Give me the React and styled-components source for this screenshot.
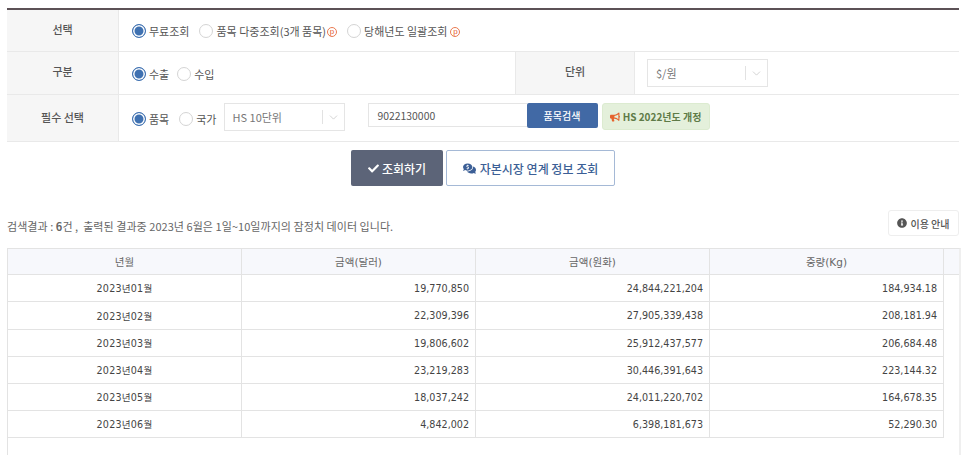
import styled, { createGlobalStyle } from "styled-components";
import { FaCheck, FaBullhorn, FaInfoCircle, FaCommentsDollar } from "react-icons/fa";
import { LuChevronDown } from "react-icons/lu";

const GlobalStyle = createGlobalStyle`
  html, body { margin: 0; padding: 0; background: #fff; }
  body {
    font-family: "Noto Sans CJK KR", "Noto Sans", sans-serif;
    font-size: 11px;
    color: #555;
    overflow: hidden;
  }
`;

const Page = styled.div`
  width: 966px;
  height: 455px;
  padding: 8px 5px 0 7px;
  box-sizing: border-box;
  overflow: hidden;
`;

const Form = styled.div`
  border-top: 2px solid #5c5156;
  width: 952px;
`;

const Row = styled.div`
  display: flex;
  height: ${(p) => p.$h}px;
  box-sizing: border-box;
  border-bottom: 1px solid #e9e9e9;
`;

const Label = styled.div`
  width: ${(p) => p.$w}px;
  flex: none;
  box-sizing: border-box;
  background: #f6f6f6;
  border-right: 1px solid #e9e9e9;
  ${(p) => p.$left && "border-left: 1px solid #e9e9e9;"}
  display: flex;
  align-items: center;
  justify-content: center;
  padding-bottom: ${(p) => p.$pb ?? 4}px;
  font-weight: 500;
  color: #555;
`;

const Cell = styled.div`
  display: flex;
  align-items: ${(p) => (p.$top ? "flex-start" : "center")};
  flex: ${(p) => (p.$fixed ? "none" : 1)};
  width: ${(p) => (p.$fixed ? `${p.$fixed}px` : "auto")};
  padding: ${(p) => (p.$top ? "8px 0 0 13px" : `0 0 0 ${p.$pl ?? 13}px`)};
  box-sizing: border-box;
`;

const Radio = styled.label`
  display: inline-flex;
  align-items: center;
  gap: 3px;
  margin-right: ${(p) => p.$mr ?? 10}px;
  margin-top: ${(p) => p.$mt ?? 1}px;
  white-space: nowrap;
  color: #555;
`;

const Dot = styled.span`
  width: 14px;
  height: 14px;
  flex: none;
  box-sizing: border-box;
  border-radius: 50%;
  border: 1px solid ${(p) => (p.$on ? "#3f71b1" : "#d4d4d4")};
  background: ${(p) => (p.$on ? "#3f71b1" : "#fff")};
  box-shadow: ${(p) => (p.$on ? "inset 0 0 0 1.5px #fff" : "none")};
`;

const OptionText = styled.span`
  display: inline-flex;
  align-items: center;
`;

const Premium = styled.span`
  width: 10px;
  height: 10px;
  margin-left: ${(p) => p.$ml ?? 1}px;
  margin-top: 2px;
  box-sizing: border-box;
  border: 1px solid #ea7a50;
  border-radius: 50%;
  color: #e5602f;
  font-family: "Liberation Sans", sans-serif;
  font-size: 8px;
  line-height: 7px;
  text-align: center;
`;

const SelectBox = styled.div`
  width: 121px;
  height: 28px;
  box-sizing: border-box;
  border: 1px solid #e5e5e5;
  background: #fff;
  display: flex;
  align-items: center;
  padding-left: 8px;
  color: #777;
`;

const SelectText = styled.span`
  flex: 1;
  padding-bottom: 1px;
`;

const SelectArrow = styled.span`
  width: 21px;
  height: 14px;
  border-left: 1px solid #e2e2e2;
  display: flex;
  align-items: center;
  justify-content: center;
  color: #bbb;
`;

const CodeInput = styled.div`
  width: 159px;
  height: 24px;
  margin-left: 23px;
  box-sizing: border-box;
  border: 1px solid #e5e5e5;
  border-right: 0;
  padding-left: 9px;
  display: flex;
  align-items: center;
  color: #555;
  font-size: 10.4px;
`;

const SearchButton = styled.div`
  width: 71px;
  height: 25px;
  box-sizing: border-box;
  background: #4169a5;
  border-radius: 2px;
  color: #fff;
  font-size: 10px;
  font-weight: 500;
  display: flex;
  align-items: center;
  justify-content: center;
`;

const Notice = styled.div`
  width: 108px;
  height: 27px;
  margin-left: 4px;
  box-sizing: border-box;
  background: #e4f0db;
  border: 1px solid #dcebd0;
  border-radius: 3px;
  color: #5e7b47;
  font-size: 10px;
  font-weight: 700;
  display: flex;
  align-items: center;
  justify-content: center;
  gap: 3px;
  svg { color: #e5632c; font-size: 10px; }
`;

const Actions = styled.div`
  display: flex;
  justify-content: center;
  gap: 3px;
  width: 952px;
  height: 36px;
  margin-top: 8px;
  box-sizing: border-box;
`;

const PrimaryButton = styled.div`
  width: 92px;
  box-sizing: border-box;
  background: #5c6478;
  border-radius: 2px;
  color: #fff;
  font-size: 12px;
  font-weight: 500;
  display: flex;
  align-items: center;
  justify-content: center;
  gap: 3px;
`;

const OutlineButton = styled.div`
  width: 169px;
  box-sizing: border-box;
  background: #fff;
  border: 1px solid #a5b9d6;
  border-radius: 2px;
  color: #3c5f96;
  font-size: 12px;
  font-weight: 500;
  display: flex;
  align-items: center;
  justify-content: center;
  gap: 4px;
`;

const ResultBar = styled.div`
  display: flex;
  justify-content: space-between;
  align-items: flex-start;
  width: 952px;
  height: 38px;
  margin-top: 24px;
`;

const ResultText = styled.div`
  font-size: 11px;
  letter-spacing: 0.05px;
  color: #666;
  padding-top: 8px;
  b { font-weight: 700; }
`;

const GuideButton = styled.div`
  width: 71px;
  height: 26px;
  box-sizing: border-box;
  border: 1px solid #eee;
  border-radius: 3px;
  font-size: 10px;
  font-weight: 500;
  color: #555;
  display: flex;
  align-items: center;
  justify-content: center;
  gap: 3px;
`;

const Grid = styled.div`
  width: 954px;
  height: 207px;
  box-sizing: border-box;
  border-left: 1px solid #e3e3e3;
  border-top: 1px solid #e3e3e3;
  border-right: 2px solid #efefef;
`;

const GridRow = styled.div`
  display: grid;
  grid-template-columns: repeat(4, 234px) ${(p) => (p.$head ? "1fr" : "")};
  height: ${(p) => p.$h}px;
  box-sizing: border-box;
  width: ${(p) => (p.$head ? "951px" : "936px")};
  border-bottom: 1px solid #e3e3e3;
  background: ${(p) => (p.$head ? "#f7f8fc" : "#fff")};
`;

const HeadCell = styled.div`
  display: flex;
  align-items: center;
  justify-content: center;
  border-right: 1px solid #e3e3e3;
  font-family: "DejaVu Sans", "Noto Sans CJK KR", sans-serif;
  font-size: 10.5px;
  color: #666;
  &:last-child { border-right: 0; }
`;

const DataCell = styled.div`
  display: flex;
  align-items: center;
  justify-content: ${(p) => (p.$right ? "flex-end" : "center")};
  padding-right: ${(p) => (p.$right ? "6px" : "0")};
  border-right: 1px solid #e3e3e3;
  font-family: "DejaVu Sans", "Noto Sans CJK KR", sans-serif;
  font-size: 9.6px;
  letter-spacing: ${(p) => (p.$right ? "0" : "0.2px")};
  color: #444;
`;

const rows = [
  ["2023년01월", "19,770,850", "24,844,221,204", "184,934.18", 27],
  ["2023년02월", "22,309,396", "27,905,339,438", "208,181.94", 28],
  ["2023년03월", "19,806,602", "25,912,437,577", "206,684.48", 27],
  ["2023년04월", "23,219,283", "30,446,391,643", "223,144.32", 27],
  ["2023년05월", "18,037,242", "24,011,220,702", "164,678.35", 27],
  ["2023년06월", "4,842,002", "6,398,181,673", "52,290.30", 27],
];

function Select({ children }) {
  return (
    <SelectBox>
      <SelectText>{children}</SelectText>
      <SelectArrow>
        <LuChevronDown size={13} strokeWidth={1.2} />
      </SelectArrow>
    </SelectBox>
  );
}

function Option({ on, children, mr, mt }) {
  return (
    <Radio $mr={mr} $mt={mt}>
      <Dot $on={on} />
      {children}
    </Radio>
  );
}

export default function App() {
  return (
    <Page>
      <GlobalStyle />
      <Form>
        <Row $h={42}>
          <Label $w={112}>선택</Label>
          <Cell>
            <Option on>무료조회</Option>
            <Option>
              <OptionText>
                품목 다중조회(3개 품목)<Premium>p</Premium>
              </OptionText>
            </Option>
            <Option>
              <OptionText>
                당해년도 일괄조회<Premium $ml={3}>p</Premium>
              </OptionText>
            </Option>
          </Cell>
        </Row>
        <Row $h={43}>
          <Label $w={112}>구분</Label>
          <Cell $fixed={396}>
            <Option on mr={8}>수출</Option>
            <Option>수입</Option>
          </Cell>
          <Label $w={120} $left>단위</Label>
          <Cell $pl={12}>
            <Select>$/원</Select>
          </Cell>
        </Row>
        <Row $h={47}>
          <Label $w={112} $pb={3}>필수 선택</Label>
          <Cell $top>
            <Option on mr={10} mt={8}>품목</Option>
            <Option mr={7} mt={8}>국가</Option>
            <Select>HS 10단위</Select>
            <CodeInput>9022130000</CodeInput>
            <SearchButton>품목검색</SearchButton>
            <Notice>
              <FaBullhorn />
              HS 2022년도 개정
            </Notice>
          </Cell>
        </Row>
      </Form>
      <Actions>
        <PrimaryButton>
          <FaCheck size={11} />
          조회하기
        </PrimaryButton>
        <OutlineButton>
          <FaCommentsDollar size={13} />
          자본시장 연계 정보 조회
        </OutlineButton>
      </Actions>
      <ResultBar>
        <ResultText>
          검색결과 : <b>6</b>건 , &nbsp;출력된 결과중 2023년 6월은 1일~10일까지의 잠정치 데이터 입니다.
        </ResultText>
        <GuideButton>
          <FaInfoCircle size={10} />
          이용 안내
        </GuideButton>
      </ResultBar>
      <Grid>
        <GridRow $head $h={26}>
          <HeadCell>년월</HeadCell>
          <HeadCell>금액(달러)</HeadCell>
          <HeadCell>금액(원화)</HeadCell>
          <HeadCell>중량(Kg)</HeadCell>
          <HeadCell />
        </GridRow>
        {rows.map(([month, usd, krw, kg, h]) => (
          <GridRow key={month} $h={h}>
            <DataCell>{month}</DataCell>
            <DataCell $right>{usd}</DataCell>
            <DataCell $right>{krw}</DataCell>
            <DataCell $right>{kg}</DataCell>
          </GridRow>
        ))}
      </Grid>
    </Page>
  );
}
